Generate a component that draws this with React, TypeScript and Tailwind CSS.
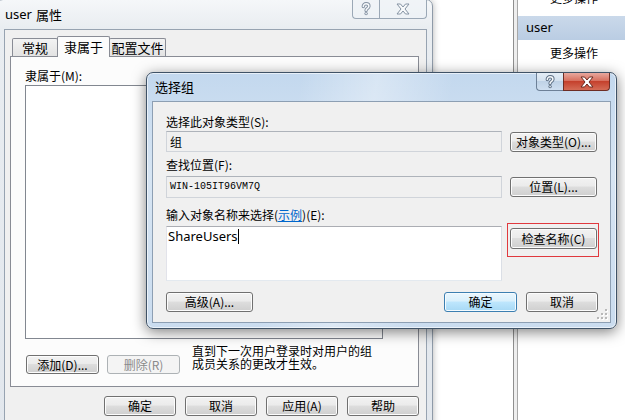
import React from "react";

type BtnProps = { children: React.ReactNode; className?: string; variant?: "normal" | "default" | "disabled" };

function Btn({ children, className = "", variant = "normal" }: BtnProps) {
  const v =
    variant === "default"
      ? "border-[#3c7fb1] bg-[linear-gradient(#eaf6fd_0%,#d9f0fc_45%,#bee6fd_50%,#a7d9f5_100%)] shadow-[inset_0_0_0_1px_#f4fbff] text-black"
      : variant === "disabled"
      ? "border-[#adb2b5] bg-[#f4f4f4] text-[#8a8a8a]"
      : "border-[#707070] bg-[linear-gradient(#f2f2f2_0%,#ebebeb_45%,#dddddd_50%,#cfcfcf_100%)] shadow-[inset_0_0_0_1px_#fcfcfc] text-black";
  return (
    <div className={`flex items-center justify-center rounded-[3px] border text-[12px] leading-none whitespace-nowrap ${v} ${className}`}>
      {children}
    </div>
  );
}

function XGlyph({ fill, stroke }: { fill: string; stroke: string }) {
  return (
    <svg width="14" height="12" viewBox="0 0 14 12">
      <polygon
        points="1,1 4.5,1 7,4 9.5,1 13,1 9,6 13,11 9.5,11 7,8 4.5,11 1,11 5,6"
        fill={fill}
        stroke={stroke}
        strokeWidth="1"
        strokeLinejoin="round"
      />
    </svg>
  );
}

function QGlyph({ outer, inner }: { outer: string; inner: string }) {
  const d = "M4.3 4.6 C4.3 2.8 5.6 1.8 7.1 1.8 C8.8 1.8 9.9 2.9 9.9 4.3 C9.9 5.8 8.6 6.3 7.8 6.9 C7.2 7.3 7.1 7.8 7.1 8.6";
  return (
    <svg width="12" height="14" viewBox="1 0 12 14">
      <path d={d} fill="none" stroke={outer} strokeWidth="3.4" strokeLinecap="round" />
      <circle cx="7.1" cy="11.6" r="1.7" fill={outer} />
      <path d={d} fill="none" stroke={inner} strokeWidth="1.5" strokeLinecap="round" />
      <circle cx="7.1" cy="11.6" r="0.8" fill={inner} />
    </svg>
  );
}

function Grip() {
  const dots = [
    [8, 0],
    [8, 4],
    [4, 4],
    [8, 8],
    [4, 8],
    [0, 8],
  ];
  return (
    <svg width="11" height="11" viewBox="0 0 11 11">
      {dots.map(([x, y], i) => (
        <g key={i}>
          <rect x={x + 1} y={y + 1} width="2" height="2" fill="#ffffff" />
          <rect x={x} y={y} width="2" height="2" fill="#b8b8b8" />
        </g>
      ))}
    </svg>
  );
}

export default function App() {
  return (
    <div className="relative w-[625px] h-[420px] overflow-hidden bg-white flex font-['Noto_Sans_CJK_SC','Noto_Sans',sans-serif] text-black">
      {/* MMC background */}
      <div className="w-[513px] h-full bg-white" />
      <div className="w-[5px] h-full border-x border-l-[#8f8f8f] border-r-[#a8a8a8] bg-[#eeeeee]" />
      <div className="flex-1 h-full bg-white flex flex-col">
        <div className="-mt-[10px] h-[16px] leading-[16px] pl-[32px] text-[12px] whitespace-nowrap">更多操作</div>
        <div className="mt-[10px] h-[24px] flex items-center pl-[8px] bg-[linear-gradient(#cad9ea,#bacde3)] text-[13px] font-['Noto_Sans',sans-serif]">
          user
        </div>
        <div className="h-[26px] flex items-center pl-[32px] text-[12px] whitespace-nowrap">更多操作</div>
      </div>

      {/* back window: user 属性 */}
      <div className="absolute left-[-4px] top-[-1px] w-[437px] h-[440px] rounded-t-[7px] border border-[#8e9aa8] bg-[linear-gradient(180deg,#f5f7f9,#e9edf1_28px,#e2e7ed)] shadow-[0_0_7px_rgba(0,0,0,0.3)] flex flex-col pl-[7px] pr-[5px]">
        <div className="h-[29px] flex items-start -ml-[7px] -mr-[5px] pl-[8px] pr-[5px]">
          <div className="h-[29px] flex items-center text-[13px] whitespace-nowrap">
            <span className="font-['Noto_Sans',sans-serif]">user</span>
            <span className="ml-[4px]">属性</span>
          </div>
          <div className="ml-auto flex">
            <div className="w-[27px] h-[19px] flex items-center justify-center border border-t-0 border-r-0 border-[#9ba8b6] rounded-bl-[4px] bg-[#eef2f6]/70">
              <QGlyph outer="#8593a3" inner="#f7f9fb" />
            </div>
            <div className="w-[48px] h-[19px] flex items-center justify-center border border-t-0 border-[#9ba8b6] rounded-br-[4px] bg-[#eef2f6]/70">
              <XGlyph fill="#f7f9fb" stroke="#8593a3" />
            </div>
          </div>
        </div>
        <div className="flex-1 border border-b-0 border-[#97a3b1] bg-[#f0f0f0] flex flex-col">
          {/* tabs */}
          <div className="relative z-10 mt-[6px] -mb-[1px] h-[21px] flex items-end pl-[7px]">
            <div className="mb-[1px] w-[46px] h-[18px] flex items-center justify-center border border-b-0 border-[#898c95] rounded-t-[2px] bg-[linear-gradient(#f3f3f3,#e3e3e3)] text-[13px] leading-none">
              常规
            </div>
            <div className="-ml-[1px] w-[53px] h-[21px] flex items-center justify-center pb-[1px] border border-b-0 border-[#898c95] rounded-t-[2px] bg-[#fcfcfc] text-[13px] leading-none">
              隶属于
            </div>
            <div className="-ml-[1px] mb-[1px] w-[57px] h-[18px] flex items-center justify-center border border-b-0 border-[#898c95] rounded-t-[2px] bg-[linear-gradient(#f3f3f3,#e3e3e3)] text-[13px] leading-none">
              配置文件
            </div>
          </div>
          {/* tab panel */}
          <div className="ml-[5px] w-[409px] h-[331px] border border-[#898c95] bg-[#fcfcfc] flex flex-col pl-[14px] pt-[12px]">
            <div className="h-[14px] leading-[14px] text-[12px] whitespace-nowrap">隶属于(M):</div>
            <div className="mt-[2px] w-[358px] h-[254px] border border-[#828790] bg-white" />
            <div className="mt-[5px] flex items-start">
              <Btn className="mt-[11px] ml-[1px] w-[73px] h-[19px]">添加(D)...</Btn>
              <Btn variant="disabled" className="mt-[11px] ml-[8px] w-[73px] h-[19px]">
                删除(R)
              </Btn>
              <div className="ml-[12px] text-[12px] leading-[13px] whitespace-nowrap">
                直到下一次用户登录时对用户的组
                <br />
                成员关系的更改才生效。
              </div>
            </div>
          </div>
          {/* bottom buttons */}
          <div className="ml-[5px] w-[409px] mt-[9px] flex justify-end gap-[9px]">
            <Btn className="w-[72px] h-[20px]">确定</Btn>
            <Btn className="w-[72px] h-[20px]">取消</Btn>
            <Btn className="w-[72px] h-[20px]">应用(A)</Btn>
            <Btn className="w-[72px] h-[20px]">帮助</Btn>
          </div>
        </div>
      </div>

      {/* front dialog: 选择组 */}
      <div className="absolute left-[146px] top-[72px] w-[471px] h-[257px] rounded-[7px] border border-[#3f5266] bg-[linear-gradient(100deg,rgba(255,255,255,0)_30%,rgba(255,255,255,0.35)_45%,rgba(255,255,255,0)_60%),linear-gradient(180deg,#c3d8ee,#d7e5f3_40%,#cadcef)] shadow-[0_3px_14px_rgba(0,0,0,0.5),inset_0_0_0_1px_rgba(255,255,255,0.6)] flex flex-col">
        <div className="h-[28px] flex items-start pl-[8px] pr-[6px]">
          <div className="h-[27px] flex items-center text-[13px] whitespace-nowrap">选择组</div>
          <div className="ml-auto flex">
            <div className="w-[27px] h-[18px] flex items-center justify-center border border-t-0 border-r-0 border-[#6d8097] rounded-bl-[4px] bg-[linear-gradient(#e4edf6,#d2e0ee_50%,#bfd2e6_50%,#cfdff0)]">
              <QGlyph outer="#5d6f84" inner="#f4f7fa" />
            </div>
            <div className="w-[47px] h-[18px] flex items-center justify-center border border-t-0 border-[#6e2d24] rounded-br-[4px] bg-[linear-gradient(#e8a89e,#d7705f_45%,#c5412d_50%,#d46c56_100%)]">
              <XGlyph fill="#ffffff" stroke="#6a2a20" />
            </div>
          </div>
        </div>
        <div className="relative flex-1 mx-[5px] mb-[5px] border border-[#8d9fb3] bg-[#f0f0f0] flex flex-col pl-[13px] pr-[13px] pt-[13px]">
          <div className="h-[14px] leading-[14px] text-[12px] whitespace-nowrap">选择此对象类型(S):</div>
          <div className="mt-[2px] flex items-center gap-[8px]">
            <div className="w-[336px] h-[21px] border border-[#d0d4da] border-t-[#aeb3ba] bg-[#f0f0f0] flex items-center pl-[3px] text-[12px] leading-none">
              组
            </div>
            <Btn className="w-[87px] h-[20px]">对象类型(O)...</Btn>
          </div>
          <div className="mt-[6px] h-[14px] leading-[14px] text-[12px] whitespace-nowrap">查找位置(F):</div>
          <div className="mt-[4px] flex items-center gap-[8px]">
            <div className="w-[336px] h-[22px] border border-[#d0d4da] border-t-[#aeb3ba] bg-[#f0f0f0] flex items-center pl-[3px] text-[10px] leading-none font-['Liberation_Mono',monospace]">
              WIN-105IT96VM7Q
            </div>
            <Btn className="w-[87px] h-[20px]">位置(L)...</Btn>
          </div>
          <div className="mt-[10px] h-[14px] leading-[14px] text-[12px] whitespace-nowrap">
            输入对象名称来选择(<span className="text-[#0066cc] underline">示例</span>)(E):
          </div>
          <div className="mt-[4px] flex items-start gap-[8px]">
            <div className="w-[336px] h-[55px] border border-[#abadb3] border-l-[#e2e3ea] border-r-[#dbdfe6] border-b-[#e3e9ef] bg-white pl-[1px] pt-[1px] flex items-start">
              <span className="text-[13px] leading-[16px] font-['Noto_Sans',sans-serif]">ShareUsers</span>
              <span className="mt-[1px] w-[1px] h-[15px] bg-black" />
            </div>
            <div className="relative mt-[2px]">
              <Btn className="w-[87px] h-[21px]">检查名称(C)</Btn>
              <div className="absolute -left-[3px] -right-[2px] -top-[5px] -bottom-[8px] border border-[#e0393e]" />
            </div>
          </div>
          <div className="mt-[11px] flex items-center">
            <Btn className="w-[87px] h-[20px]">高级(A)...</Btn>
            <div className="ml-auto flex gap-[9px] mr-[-1px]">
              <Btn variant="default" className="w-[73px] h-[20px]">
                确定
              </Btn>
              <Btn className="w-[72px] h-[20px]">取消</Btn>
            </div>
          </div>
          <div className="absolute right-[2px] bottom-[2px]">
            <Grip />
          </div>
        </div>
      </div>
    </div>
  );
}
